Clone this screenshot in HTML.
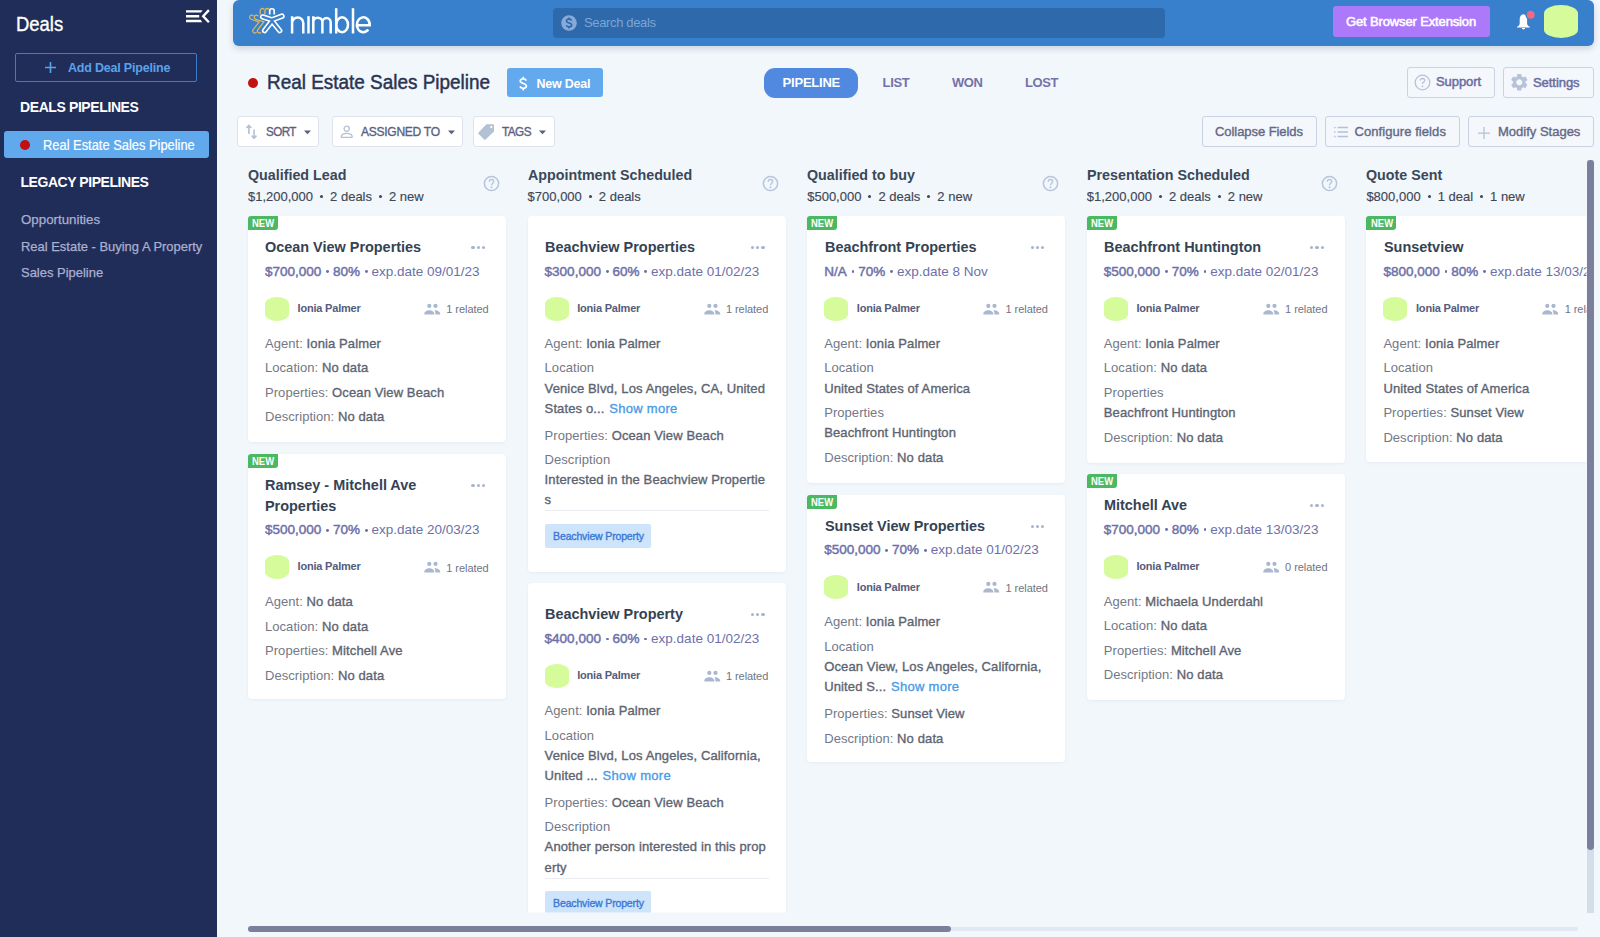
<!DOCTYPE html>
<html><head><meta charset="utf-8"><title>Deals</title>
<style>
html,body{margin:0;padding:0;}
body{width:1600px;height:937px;overflow:hidden;position:relative;background:#f2f7fb;font-family:"Liberation Sans", sans-serif;}
.a{position:absolute;}
.t{position:absolute;white-space:nowrap;}
b{font-weight:700;}
</style></head><body>
<div class="a" style="left:0.00px;top:0.00px;width:217.00px;height:937.00px;background:#212d59;"></div>
<div class="t" style="left:16.00px;top:13.65px;font-size:20.5px;line-height:20.5px;color:#ffffff;transform:scaleX(0.9);transform-origin:0 0;-webkit-text-stroke:0.35px currentColor;">Deals</div>
<svg class="a" style="left:180px;top:4px" width="36" height="24" viewBox="180 4 36 24"><path d="M186 10.2 H202.6 L201 12.6 H186Z M186 15 H199.2 V17.4 H186Z M186 19.8 H200.6 L202.2 22.2 H186Z" fill="#fff"/><path d="M208.9 10.1 L203.2 16.2 L208.9 22.3" stroke="#fff" stroke-width="2.4" fill="none" stroke-linejoin="miter"/></svg>
<div class="a" style="left:15.00px;top:53.00px;width:182.00px;height:29.00px;border:1px solid #3b7dcc;border-radius:2px;box-sizing:border-box;"></div>
<svg class="a" style="left:44px;top:61px" width="13" height="13" viewBox="0 0 13 13"><path d="M6.5 1 V12 M1 6.5 H12" stroke="#5ba2ea" stroke-width="1.6" fill="none"/></svg>
<div class="t" style="left:68.00px;top:61.92px;font-size:12.5px;line-height:12.5px;color:#5ba2ea;font-weight:700;letter-spacing:-0.2px;">Add Deal Pipeline</div>
<div class="t" style="left:20.00px;top:100.15px;font-size:14px;line-height:14px;color:#ffffff;font-weight:700;letter-spacing:-0.4px;">DEALS PIPELINES</div>
<div class="a" style="left:4.30px;top:131.00px;width:204.70px;height:27.00px;background:#5fa9ec;border-radius:3px;"></div>
<div class="a" style="left:19.60px;top:139.60px;width:10.40px;height:10.40px;background:#c20f0f;border-radius:50%;"></div>
<div class="t" style="left:43.20px;top:137.75px;font-size:14px;line-height:14px;color:#ffffff;transform:scaleX(0.92);transform-origin:0 0;-webkit-text-stroke:0.2px currentColor;">Real Estate Sales Pipeline</div>
<div class="t" style="left:20.50px;top:175.25px;font-size:14px;line-height:14px;color:#ffffff;font-weight:700;letter-spacing:-0.45px;">LEGACY PIPELINES</div>
<div class="t" style="left:21.00px;top:213.37px;font-size:13.5px;line-height:13.5px;color:#aab0d0;transform:scaleX(0.985);transform-origin:0 0;-webkit-text-stroke:0.25px currentColor;">Opportunities</div>
<div class="t" style="left:21.00px;top:240.07px;font-size:13.5px;line-height:13.5px;color:#aab0d0;transform:scaleX(0.959);transform-origin:0 0;-webkit-text-stroke:0.25px currentColor;">Real Estate - Buying A Property</div>
<div class="t" style="left:21.00px;top:265.97px;font-size:13.5px;line-height:13.5px;color:#aab0d0;transform:scaleX(0.96);transform-origin:0 0;-webkit-text-stroke:0.25px currentColor;">Sales Pipeline</div>
<div class="a" style="left:233.00px;top:0.00px;width:1360.50px;height:45.50px;background:#3880cc;border-radius:6px;box-shadow:0 3px 6px rgba(40,60,100,0.18);"></div>
<svg class="a" style="left:0;top:0" width="400" height="45" viewBox="0 0 400 45"><path d="M253.76 15.82 L252.34 15.35 A2.05 2.05 0 0 0 251.06 19.25 L259.19 21.94 L253.18 29.64 A2.05 2.05 0 0 0 256.42 32.16" stroke="#d6b268" stroke-width="1.25" fill="none" stroke-linejoin="round"/><path d="M260.20 14.6 V11 A2.3 2.3 0 0 1 264.20 9.3" stroke="#d6b268" stroke-width="1.35" fill="none"/><path d="M258.46 15.82 L257.04 15.35 A2.05 2.05 0 0 0 255.76 19.25 L263.89 21.94 L257.88 29.64 A2.05 2.05 0 0 0 261.12 32.16" stroke="#e6b84e" stroke-width="1.25" fill="none" stroke-linejoin="round"/><path d="M264.90 14.6 V11 A2.3 2.3 0 0 1 268.90 9.3" stroke="#e6b84e" stroke-width="1.35" fill="none"/><path d="M269.7 14.6 V11 A2.25 2.25 0 0 1 274.2 11 V14.6" stroke="#ffffff" stroke-width="1.7" fill="none"/><path d="M272 19.8 L262.6 16.9 M272 19.8 L282 16.1 M272 21 L264.6 30.6 M272 21 L279.7 30.6" stroke="#ffffff" stroke-width="5.4" stroke-linecap="round" stroke-linejoin="round" fill="none"/><path d="M272 19.8 L262.6 16.9 M272 19.8 L282 16.1 M272 21 L264.6 30.6 M272 21 L279.7 30.6" stroke="#3880cc" stroke-width="2.3" stroke-linecap="round" stroke-linejoin="round" fill="none"/><g stroke="#fff" stroke-width="2.5" fill="none"><path d="M292.1 16.2 V33.5 M292.1 23 A5.6 5.6 0 0 1 303.3 23 V33.5"/><path d="M308.5 16.2 V33.5"/><path d="M313.3 16.2 V33.5 M313.3 22.2 A4.55 4.55 0 0 1 322.4 22.2 V33.5 M322.4 22.2 A4.15 4.15 0 0 1 330.7 22.2 V33.5"/><path d="M336.2 8.2 V33.5"/><ellipse cx="342.1" cy="24.8" rx="5.9" ry="7.45"/><path d="M353 8.2 V33.5"/><path d="M356.85 25.2 H369.75 A6.45 7.45 0 1 0 368.24 29.59"/></g></svg>
<div class="a" style="left:552.60px;top:8.00px;width:612.40px;height:30.00px;background:#2d69ab;border-radius:4px;"></div>
<svg class="a" style="left:561px;top:15px" width="16" height="16" viewBox="0 0 16 16"><circle cx="8" cy="8" r="7.8" fill="#88aad8"/><path d="M10.6 5.6 C10.2 4.6 9.2 4.1 8 4.1 C6.6 4.1 5.5 4.8 5.5 6 C5.5 8.6 10.7 7.3 10.7 10 C10.7 11.2 9.5 11.9 8 11.9 C6.7 11.9 5.7 11.3 5.3 10.3 M8 2.6 V4.1 M8 11.9 V13.4" stroke="#2d69ab" stroke-width="1.6" fill="none"/></svg>
<div class="t" style="left:584.00px;top:15.80px;font-size:13px;line-height:13px;color:#7ea5d5;letter-spacing:-0.35px;">Search deals</div>
<div class="a" style="left:1333.00px;top:6.00px;width:157.00px;height:31.00px;background:#ad79fb;border-radius:3px;"></div>
<div class="t" style="left:1346.00px;top:15.00px;font-size:13px;line-height:13px;color:#ffffff;letter-spacing:-0.14px;-webkit-text-stroke:0.55px currentColor;">Get Browser Extension</div>
<svg class="a" style="left:1510px;top:6px" width="30" height="28" viewBox="1510 6 30 28"><path d="M1523.4 14.3 C1521.2 14.6 1519.7 16.4 1519.7 19.2 V23.4 C1519.7 24.9 1518.6 26 1517 26.8 V27.5 H1529.8 V26.8 C1528.2 26 1527.1 24.9 1527.1 23.4 V19.2 C1527.1 16.4 1525.6 14.6 1523.4 14.3 Z" fill="#fff"/><path d="M1521.9 28 H1525 C1525 28.9 1524.3 29.4 1523.45 29.4 C1522.6 29.4 1521.9 28.9 1521.9 28 Z" fill="#fff"/><circle cx="1530.7" cy="14.8" r="4.6" fill="#f4697f" stroke="#3880cc" stroke-width="1.3"/></svg>
<div class="a" style="left:1544.00px;top:5.00px;width:34.00px;height:33.00px;background:#d6fb9b;border-radius:50% / 25%;"></div>
<div class="a" style="left:247.60px;top:77.80px;width:10.00px;height:10.00px;background:#c1130f;border-radius:50%;"></div>
<div class="t" style="left:266.60px;top:71.57px;font-size:20px;line-height:20px;color:#2a3452;transform:scaleX(0.946);transform-origin:0 0;-webkit-text-stroke:0.45px currentColor;">Real Estate Sales Pipeline</div>
<div class="a" style="left:507.00px;top:68.00px;width:96.00px;height:29.00px;background:#63a9ed;border-radius:3px;"></div>
<svg class="a" style="left:516px;top:75.2px" width="14" height="18" viewBox="0 0 14 18"><path d="M10.3 5.6 C9.9 4.5 8.8 3.9 7.2 3.9 C5.5 3.9 4.2 4.8 4.2 6.1 C4.2 9.1 10.4 7.8 10.4 11 C10.4 12.4 9 13.3 7.2 13.3 C5.6 13.3 4.4 12.6 3.9 11.4 M7.2 1.8 V3.9 M7.2 13.3 V15.6" stroke="#fff" stroke-width="1.7" fill="none"/></svg>
<div class="t" style="left:536.60px;top:78.02px;font-size:12.5px;line-height:12.5px;color:#ffffff;font-weight:700;letter-spacing:-0.25px;">New Deal</div>
<div class="a" style="left:764.00px;top:68.00px;width:94.40px;height:30.00px;background:#5189e1;border-radius:11px;"></div>
<div class="t" style="left:782.60px;top:76.00px;font-size:13px;line-height:13px;color:#ffffff;font-weight:700;letter-spacing:-0.22px;">PIPELINE</div>
<div class="t" style="left:882.60px;top:76.00px;font-size:13px;line-height:13px;color:#7472a8;font-weight:700;letter-spacing:-0.35px;">LIST</div>
<div class="t" style="left:952.00px;top:76.00px;font-size:13px;line-height:13px;color:#7472a8;font-weight:700;letter-spacing:-0.45px;">WON</div>
<div class="t" style="left:1025.00px;top:76.00px;font-size:13px;line-height:13px;color:#7472a8;font-weight:700;letter-spacing:-0.42px;">LOST</div>
<div class="a" style="left:1407.00px;top:67.20px;width:88.00px;height:31.20px;border:1px solid #cdd1e2;border-radius:3px;box-sizing:border-box;background:#f4f7fc;"></div>
<svg class="a" style="left:1414.4px;top:74px" width="17" height="17" viewBox="0 0 17 17"><circle cx="8.5" cy="8.5" r="7.3" stroke="#b7c2d9" stroke-width="1.3" fill="none"/><path d="M6.3 6.6 C6.3 5.3 7.3 4.5 8.5 4.5 C9.7 4.5 10.7 5.3 10.7 6.5 C10.7 8 8.5 8.2 8.5 10" stroke="#b7c2d9" stroke-width="1.3" fill="none"/><circle cx="8.5" cy="12.3" r="0.9" fill="#b7c2d9"/></svg>
<div class="t" style="left:1436.00px;top:75.10px;font-size:13px;line-height:13px;color:#6c6da0;letter-spacing:-0.08px;-webkit-text-stroke:0.5px currentColor;">Support</div>
<div class="a" style="left:1503.00px;top:67.20px;width:90.60px;height:31.20px;border:1px solid #cdd1e2;border-radius:3px;box-sizing:border-box;background:#f4f7fc;"></div>
<svg class="a" style="left:1509.1px;top:72.2px" width="20.6" height="20.6" viewBox="0 0 24 24"><path fill="#b7c2d9" d="M19.14 12.94c.04-.3.06-.61.06-.94 0-.32-.02-.64-.07-.94l2.03-1.58a.49.49 0 0 0 .12-.61l-1.92-3.32a.488.488 0 0 0-.59-.22l-2.39.96c-.5-.38-1.03-.7-1.62-.94l-.36-2.54a.484.484 0 0 0-.48-.41h-3.84c-.24 0-.43.17-.47.41l-.36 2.54c-.59.24-1.13.57-1.62.94l-2.39-.96c-.22-.08-.47 0-.59.22L2.74 8.87c-.12.21-.08.47.12.61l2.03 1.58c-.05.3-.09.63-.09.94s.02.64.07.94l-2.03 1.58a.49.49 0 0 0-.12.61l1.92 3.32c.12.22.37.29.59.22l2.39-.96c.5.38 1.03.7 1.62.94l.36 2.54c.05.24.24.41.48.41h3.84c.24 0 .44-.17.47-.41l.36-2.54c.59-.24 1.13-.56 1.62-.94l2.39.96c.22.08.47 0 .59-.22l1.92-3.32c.12-.22.07-.47-.12-.61l-2.01-1.58zM12 15.6c-1.98 0-3.6-1.62-3.6-3.6s1.62-3.6 3.6-3.6 3.6 1.62 3.6 3.6-1.62 3.6-3.6 3.6z"/></svg>
<div class="t" style="left:1533.00px;top:75.50px;font-size:13px;line-height:13px;color:#6c6da0;letter-spacing:-0.05px;-webkit-text-stroke:0.5px currentColor;">Settings</div>
<div class="a" style="left:237.30px;top:116.00px;width:81.60px;height:31.00px;background:#ffffff;border:1px solid #dfe4ee;border-radius:3px;box-sizing:border-box;"></div>
<div class="a" style="left:332.30px;top:116.00px;width:130.40px;height:31.00px;background:#ffffff;border:1px solid #dfe4ee;border-radius:3px;box-sizing:border-box;"></div>
<div class="a" style="left:472.70px;top:116.00px;width:82.20px;height:31.00px;background:#ffffff;border:1px solid #dfe4ee;border-radius:3px;box-sizing:border-box;"></div>
<svg class="a" style="left:244px;top:122px" width="15" height="19" viewBox="0 0 15 19"><path d="M4.9 12 V3.6 M2.5 6 L4.9 3.4 L7.3 6" stroke="#b3c1d4" stroke-width="1.6" fill="none"/><path d="M10.1 7.5 V16 M7.7 13.6 L10.1 16.2 L12.5 13.6" stroke="#b3c1d4" stroke-width="1.6" fill="none"/></svg>
<div class="t" style="left:266.00px;top:125.62px;font-size:12.5px;line-height:12.5px;color:#5a6180;transform:scaleX(0.93);transform-origin:0 0;letter-spacing:-0.6px;-webkit-text-stroke:0.35px currentColor;">SORT</div>
<svg class="a" style="left:304px;top:130px" width="8" height="5" viewBox="0 0 8 5"><path d="M0 0.6 H7 L3.5 4.2Z" fill="#5a6180"/></svg>
<svg class="a" style="left:447.5px;top:130px" width="8" height="5" viewBox="0 0 8 5"><path d="M0 0.6 H7 L3.5 4.2Z" fill="#5a6180"/></svg>
<svg class="a" style="left:539.3px;top:130px" width="8" height="5" viewBox="0 0 8 5"><path d="M0 0.6 H7 L3.5 4.2Z" fill="#5a6180"/></svg>
<svg class="a" style="left:340px;top:125px" width="14" height="14" viewBox="0 0 14 14"><circle cx="6.7" cy="3.7" r="2.6" stroke="#b3c1d4" stroke-width="1.3" fill="none"/><path d="M1.3 12.3 V11 C1.3 9.4 4.3 8.3 6.7 8.3 C9.1 8.3 12.1 9.4 12.1 11 V12.3 Z" stroke="#b3c1d4" stroke-width="1.3" fill="none" stroke-linejoin="round"/></svg>
<div class="t" style="left:361.00px;top:125.62px;font-size:12.5px;line-height:12.5px;color:#5a6180;transform:scaleX(0.965);transform-origin:0 0;letter-spacing:-0.3px;-webkit-text-stroke:0.35px currentColor;">ASSIGNED TO</div>
<svg class="a" style="left:477px;top:123px" width="18" height="18" viewBox="0 0 18 18"><path d="M9.4 1.2 H16 Q17 1.2 17 2.2 V8.6 L8.6 16.6 Q7.9 17.3 7.2 16.6 L1.6 11 Q0.9 10.3 1.6 9.6 Z" fill="#b3c1d4"/><rect x="13.3" y="3.1" width="2" height="2" fill="#fff"/></svg>
<div class="t" style="left:502.00px;top:125.62px;font-size:12.5px;line-height:12.5px;color:#5a6180;transform:scaleX(0.94);transform-origin:0 0;letter-spacing:-0.55px;-webkit-text-stroke:0.35px currentColor;">TAGS</div>
<div class="a" style="left:1202.00px;top:116.00px;width:114.50px;height:31.00px;background:#f4f7fc;border:1px solid #cbd0e2;border-radius:3px;box-sizing:border-box;"></div>
<div class="a" style="left:1325.00px;top:116.00px;width:134.50px;height:31.00px;background:#f4f7fc;border:1px solid #cbd0e2;border-radius:3px;box-sizing:border-box;"></div>
<div class="a" style="left:1468.40px;top:116.00px;width:125.20px;height:31.00px;background:#f4f7fc;border:1px solid #cbd0e2;border-radius:3px;box-sizing:border-box;"></div>
<div class="t" style="left:1215.00px;top:125.40px;font-size:13px;line-height:13px;color:#636985;letter-spacing:-0.06px;-webkit-text-stroke:0.38px currentColor;">Collapse Fields</div>
<svg class="a" style="left:1333px;top:125.3px" width="16" height="15" viewBox="0 0 16 15"><circle cx="1.8" cy="2.5" r="0.85" fill="#b3c1d4"/><circle cx="1.8" cy="7" r="0.85" fill="#b3c1d4"/><circle cx="1.8" cy="11.5" r="0.85" fill="#b3c1d4"/><path d="M4.6 2.5 H15 M4.6 7 H15 M4.6 11.5 H15" stroke="#b3c1d4" stroke-width="1.3" fill="none"/></svg>
<div class="t" style="left:1354.50px;top:125.40px;font-size:13px;line-height:13px;color:#636985;letter-spacing:0.07px;-webkit-text-stroke:0.38px currentColor;">Configure fields</div>
<svg class="a" style="left:1477.2px;top:125.5px" width="14" height="14" viewBox="0 0 14 14"><path d="M7 1 V13 M1 7 H13" stroke="#b3c1d4" stroke-width="1.25" fill="none"/></svg>
<div class="t" style="left:1498.00px;top:125.40px;font-size:13px;line-height:13px;color:#636985;-webkit-text-stroke:0.38px currentColor;">Modify Stages</div>
<div class="a" style="left:0;top:0;width:1600px;height:937px;clip-path:polygon(220px 150px,1586.5px 150px,1586.5px 912.4px,220px 912.4px);">
<div class="t" style="left:248.00px;top:167.10px;font-size:15px;line-height:15px;color:#3a4859;transform:scaleX(0.952);transform-origin:0 0;font-weight:700;">Qualified Lead</div>
<div class="t" style="left:248.00px;top:190.10px;font-size:13px;line-height:13px;color:#3e4757;-webkit-text-stroke:0.15px currentColor;">$1,200,000<span style="display:inline-block;width:3px;height:3px;border-radius:50%;background:currentColor;vertical-align:3.5px;margin:0 7px"></span>2 deals<span style="display:inline-block;width:3px;height:3px;border-radius:50%;background:currentColor;vertical-align:3.5px;margin:0 7px"></span>2 new</div>
<svg class="a" style="left:482.50px;top:175px" width="17" height="17" viewBox="0 0 17 17"><circle cx="8.5" cy="8.5" r="7.1" stroke="#b9c5dc" stroke-width="1.5" fill="none"/><path d="M6.3 6.7 C6.3 5.3 7.3 4.5 8.5 4.5 C9.8 4.5 10.7 5.3 10.7 6.5 C10.7 8.1 8.5 8.3 8.5 10.2" stroke="#b9c5dc" stroke-width="1.45" fill="none"/><circle cx="8.5" cy="12.3" r="1" fill="#b9c5dc"/></svg>
<div class="t" style="left:527.60px;top:167.10px;font-size:15px;line-height:15px;color:#3a4859;transform:scaleX(0.952);transform-origin:0 0;font-weight:700;">Appointment Scheduled</div>
<div class="t" style="left:527.60px;top:190.10px;font-size:13px;line-height:13px;color:#3e4757;-webkit-text-stroke:0.15px currentColor;">$700,000<span style="display:inline-block;width:3px;height:3px;border-radius:50%;background:currentColor;vertical-align:3.5px;margin:0 7px"></span>2 deals</div>
<svg class="a" style="left:762.10px;top:175px" width="17" height="17" viewBox="0 0 17 17"><circle cx="8.5" cy="8.5" r="7.1" stroke="#b9c5dc" stroke-width="1.5" fill="none"/><path d="M6.3 6.7 C6.3 5.3 7.3 4.5 8.5 4.5 C9.8 4.5 10.7 5.3 10.7 6.5 C10.7 8.1 8.5 8.3 8.5 10.2" stroke="#b9c5dc" stroke-width="1.45" fill="none"/><circle cx="8.5" cy="12.3" r="1" fill="#b9c5dc"/></svg>
<div class="t" style="left:807.20px;top:167.10px;font-size:15px;line-height:15px;color:#3a4859;transform:scaleX(0.952);transform-origin:0 0;font-weight:700;">Qualified to buy</div>
<div class="t" style="left:807.20px;top:190.10px;font-size:13px;line-height:13px;color:#3e4757;-webkit-text-stroke:0.15px currentColor;">$500,000<span style="display:inline-block;width:3px;height:3px;border-radius:50%;background:currentColor;vertical-align:3.5px;margin:0 7px"></span>2 deals<span style="display:inline-block;width:3px;height:3px;border-radius:50%;background:currentColor;vertical-align:3.5px;margin:0 7px"></span>2 new</div>
<svg class="a" style="left:1041.70px;top:175px" width="17" height="17" viewBox="0 0 17 17"><circle cx="8.5" cy="8.5" r="7.1" stroke="#b9c5dc" stroke-width="1.5" fill="none"/><path d="M6.3 6.7 C6.3 5.3 7.3 4.5 8.5 4.5 C9.8 4.5 10.7 5.3 10.7 6.5 C10.7 8.1 8.5 8.3 8.5 10.2" stroke="#b9c5dc" stroke-width="1.45" fill="none"/><circle cx="8.5" cy="12.3" r="1" fill="#b9c5dc"/></svg>
<div class="t" style="left:1086.80px;top:167.10px;font-size:15px;line-height:15px;color:#3a4859;transform:scaleX(0.952);transform-origin:0 0;font-weight:700;">Presentation Scheduled</div>
<div class="t" style="left:1086.80px;top:190.10px;font-size:13px;line-height:13px;color:#3e4757;-webkit-text-stroke:0.15px currentColor;">$1,200,000<span style="display:inline-block;width:3px;height:3px;border-radius:50%;background:currentColor;vertical-align:3.5px;margin:0 7px"></span>2 deals<span style="display:inline-block;width:3px;height:3px;border-radius:50%;background:currentColor;vertical-align:3.5px;margin:0 7px"></span>2 new</div>
<svg class="a" style="left:1321.30px;top:175px" width="17" height="17" viewBox="0 0 17 17"><circle cx="8.5" cy="8.5" r="7.1" stroke="#b9c5dc" stroke-width="1.5" fill="none"/><path d="M6.3 6.7 C6.3 5.3 7.3 4.5 8.5 4.5 C9.8 4.5 10.7 5.3 10.7 6.5 C10.7 8.1 8.5 8.3 8.5 10.2" stroke="#b9c5dc" stroke-width="1.45" fill="none"/><circle cx="8.5" cy="12.3" r="1" fill="#b9c5dc"/></svg>
<div class="t" style="left:1366.40px;top:167.10px;font-size:15px;line-height:15px;color:#3a4859;transform:scaleX(0.952);transform-origin:0 0;font-weight:700;">Quote Sent</div>
<div class="t" style="left:1366.40px;top:190.10px;font-size:13px;line-height:13px;color:#3e4757;-webkit-text-stroke:0.15px currentColor;">$800,000<span style="display:inline-block;width:3px;height:3px;border-radius:50%;background:currentColor;vertical-align:3.5px;margin:0 7px"></span>1 deal<span style="display:inline-block;width:3px;height:3px;border-radius:50%;background:currentColor;vertical-align:3.5px;margin:0 7px"></span>1 new</div>
<svg class="a" style="left:1600.90px;top:175px" width="17" height="17" viewBox="0 0 17 17"><circle cx="8.5" cy="8.5" r="7.1" stroke="#b9c5dc" stroke-width="1.5" fill="none"/><path d="M6.3 6.7 C6.3 5.3 7.3 4.5 8.5 4.5 C9.8 4.5 10.7 5.3 10.7 6.5 C10.7 8.1 8.5 8.3 8.5 10.2" stroke="#b9c5dc" stroke-width="1.45" fill="none"/><circle cx="8.5" cy="12.3" r="1" fill="#b9c5dc"/></svg>
<div class="a" style="left:248.00px;top:216.00px;width:258.00px;height:226.00px;background:#fff;border-radius:4px;box-shadow:0 1px 3px rgba(60,80,120,0.07);"></div>
<div class="a" style="left:248.00px;top:216.00px;width:30.00px;height:14.20px;background:#4bb862;border-radius:3px 0 3px 0;"></div>
<div class="t" style="left:252.20px;top:218.31px;font-size:10.5px;line-height:10.5px;color:#ffffff;transform:scaleX(0.9);transform-origin:0 0;font-weight:700;">NEW</div>
<div class="t" style="left:265.30px;top:239.20px;font-size:15px;line-height:15px;color:#344354;transform:scaleX(0.962);transform-origin:0 0;font-weight:700;">Ocean View Properties</div>
<div class="a" style="left:471.30px;top:246.00px;width:3.30px;height:3.30px;background:#a8b5cc;border-radius:50%;"></div>
<div class="a" style="left:476.50px;top:246.00px;width:3.30px;height:3.30px;background:#a8b5cc;border-radius:50%;"></div>
<div class="a" style="left:481.70px;top:246.00px;width:3.30px;height:3.30px;background:#a8b5cc;border-radius:50%;"></div>
<div class="t" style="left:265.00px;top:264.97px;font-size:13.5px;line-height:13.5px;color:#6d70a8;"><span style="-webkit-text-stroke:0.45px currentColor;">$700,000<span style="display:inline-block;width:2.9px;height:2.9px;border-radius:50%;background:currentColor;vertical-align:2.7px;margin:0 3.9px 0 4.8px"></span>80%</span><span style="display:inline-block;width:2.9px;height:2.9px;border-radius:50%;background:currentColor;vertical-align:2.7px;margin:0 3.9px 0 4.8px"></span>exp.date 09/01/23</div>
<div class="a" style="left:265.00px;top:296.60px;width:24.00px;height:24.00px;background:#d6fb9b;border-radius:50% / 29%;"></div>
<div class="t" style="left:297.60px;top:303.09px;font-size:11px;line-height:11px;color:#565c7b;font-weight:700;letter-spacing:-0.2px;">Ionia Palmer</div>
<svg class="a" style="left:424.00px;top:301.80px" width="18" height="14" viewBox="0 0 18 14"><circle cx="5.3" cy="3.9" r="2.1" fill="#a9b8cf"/><circle cx="11.5" cy="3.9" r="2.1" fill="#a9b8cf"/><path d="M0.3 12.5 V11.8 C0.3 9.6 3 8.2 5.3 8.2 C7.6 8.2 10.3 9.6 10.3 11.8 V12.5Z" fill="#a9b8cf"/><path d="M11 8.3 C13.4 8.3 16.2 9.6 16.2 11.8 V12.5 H11.4 V11.8 C11.4 10.3 11.2 9.1 10.4 8.4 Z" fill="#a9b8cf"/></svg>
<div class="t" style="left:446.30px;top:304.19px;font-size:11px;line-height:11px;color:#6f7483;letter-spacing:-0.05px;">1 related</div>
<div class="t" style="left:265.00px;top:336.90px;font-size:13px;line-height:13px;color:#727886;letter-spacing:0.05px;">Agent: <span style="color:#5d6471;letter-spacing:0.12px;-webkit-text-stroke:0.35px currentColor;">Ionia Palmer</span></div>
<div class="t" style="left:265.00px;top:361.30px;font-size:13px;line-height:13px;color:#727886;letter-spacing:0.05px;">Location: <span style="color:#5d6471;letter-spacing:0.12px;-webkit-text-stroke:0.35px currentColor;">No data</span></div>
<div class="t" style="left:265.00px;top:385.70px;font-size:13px;line-height:13px;color:#727886;letter-spacing:0.05px;">Properties: <span style="color:#5d6471;letter-spacing:0.12px;-webkit-text-stroke:0.35px currentColor;">Ocean View Beach</span></div>
<div class="t" style="left:265.00px;top:410.10px;font-size:13px;line-height:13px;color:#727886;letter-spacing:0.05px;">Description: <span style="color:#5d6471;letter-spacing:0.12px;-webkit-text-stroke:0.35px currentColor;">No data</span></div>
<div class="a" style="left:248.00px;top:454.00px;width:258.00px;height:245.40px;background:#fff;border-radius:4px;box-shadow:0 1px 3px rgba(60,80,120,0.07);"></div>
<div class="a" style="left:248.00px;top:454.00px;width:30.00px;height:14.20px;background:#4bb862;border-radius:3px 0 3px 0;"></div>
<div class="t" style="left:252.20px;top:456.31px;font-size:10.5px;line-height:10.5px;color:#ffffff;transform:scaleX(0.9);transform-origin:0 0;font-weight:700;">NEW</div>
<div class="t" style="left:265.30px;top:477.20px;font-size:15px;line-height:15px;color:#344354;transform:scaleX(0.962);transform-origin:0 0;font-weight:700;">Ramsey - Mitchell Ave</div>
<div class="t" style="left:265.30px;top:497.60px;font-size:15px;line-height:15px;color:#344354;transform:scaleX(0.962);transform-origin:0 0;font-weight:700;">Properties</div>
<div class="a" style="left:471.30px;top:484.00px;width:3.30px;height:3.30px;background:#a8b5cc;border-radius:50%;"></div>
<div class="a" style="left:476.50px;top:484.00px;width:3.30px;height:3.30px;background:#a8b5cc;border-radius:50%;"></div>
<div class="a" style="left:481.70px;top:484.00px;width:3.30px;height:3.30px;background:#a8b5cc;border-radius:50%;"></div>
<div class="t" style="left:265.00px;top:523.37px;font-size:13.5px;line-height:13.5px;color:#6d70a8;"><span style="-webkit-text-stroke:0.45px currentColor;">$500,000<span style="display:inline-block;width:2.9px;height:2.9px;border-radius:50%;background:currentColor;vertical-align:2.7px;margin:0 3.9px 0 4.8px"></span>70%</span><span style="display:inline-block;width:2.9px;height:2.9px;border-radius:50%;background:currentColor;vertical-align:2.7px;margin:0 3.9px 0 4.8px"></span>exp.date 20/03/23</div>
<div class="a" style="left:265.00px;top:555.00px;width:24.00px;height:24.00px;background:#d6fb9b;border-radius:50% / 29%;"></div>
<div class="t" style="left:297.60px;top:561.49px;font-size:11px;line-height:11px;color:#565c7b;font-weight:700;letter-spacing:-0.2px;">Ionia Palmer</div>
<svg class="a" style="left:424.00px;top:560.20px" width="18" height="14" viewBox="0 0 18 14"><circle cx="5.3" cy="3.9" r="2.1" fill="#a9b8cf"/><circle cx="11.5" cy="3.9" r="2.1" fill="#a9b8cf"/><path d="M0.3 12.5 V11.8 C0.3 9.6 3 8.2 5.3 8.2 C7.6 8.2 10.3 9.6 10.3 11.8 V12.5Z" fill="#a9b8cf"/><path d="M11 8.3 C13.4 8.3 16.2 9.6 16.2 11.8 V12.5 H11.4 V11.8 C11.4 10.3 11.2 9.1 10.4 8.4 Z" fill="#a9b8cf"/></svg>
<div class="t" style="left:446.30px;top:562.59px;font-size:11px;line-height:11px;color:#6f7483;letter-spacing:-0.05px;">1 related</div>
<div class="t" style="left:265.00px;top:595.30px;font-size:13px;line-height:13px;color:#727886;letter-spacing:0.05px;">Agent: <span style="color:#5d6471;letter-spacing:0.12px;-webkit-text-stroke:0.35px currentColor;">No data</span></div>
<div class="t" style="left:265.00px;top:619.70px;font-size:13px;line-height:13px;color:#727886;letter-spacing:0.05px;">Location: <span style="color:#5d6471;letter-spacing:0.12px;-webkit-text-stroke:0.35px currentColor;">No data</span></div>
<div class="t" style="left:265.00px;top:644.10px;font-size:13px;line-height:13px;color:#727886;letter-spacing:0.05px;">Properties: <span style="color:#5d6471;letter-spacing:0.12px;-webkit-text-stroke:0.35px currentColor;">Mitchell Ave</span></div>
<div class="t" style="left:265.00px;top:668.50px;font-size:13px;line-height:13px;color:#727886;letter-spacing:0.05px;">Description: <span style="color:#5d6471;letter-spacing:0.12px;-webkit-text-stroke:0.35px currentColor;">No data</span></div>
<div class="a" style="left:527.60px;top:216.00px;width:258.00px;height:356.00px;background:#fff;border-radius:4px;box-shadow:0 1px 3px rgba(60,80,120,0.07);"></div>
<div class="t" style="left:544.90px;top:239.20px;font-size:15px;line-height:15px;color:#344354;transform:scaleX(0.962);transform-origin:0 0;font-weight:700;">Beachview Properties</div>
<div class="a" style="left:750.90px;top:246.00px;width:3.30px;height:3.30px;background:#a8b5cc;border-radius:50%;"></div>
<div class="a" style="left:756.10px;top:246.00px;width:3.30px;height:3.30px;background:#a8b5cc;border-radius:50%;"></div>
<div class="a" style="left:761.30px;top:246.00px;width:3.30px;height:3.30px;background:#a8b5cc;border-radius:50%;"></div>
<div class="t" style="left:544.60px;top:264.97px;font-size:13.5px;line-height:13.5px;color:#6d70a8;"><span style="-webkit-text-stroke:0.45px currentColor;">$300,000<span style="display:inline-block;width:2.9px;height:2.9px;border-radius:50%;background:currentColor;vertical-align:2.7px;margin:0 3.9px 0 4.8px"></span>60%</span><span style="display:inline-block;width:2.9px;height:2.9px;border-radius:50%;background:currentColor;vertical-align:2.7px;margin:0 3.9px 0 4.8px"></span>exp.date 01/02/23</div>
<div class="a" style="left:544.60px;top:296.60px;width:24.00px;height:24.00px;background:#d6fb9b;border-radius:50% / 29%;"></div>
<div class="t" style="left:577.20px;top:303.09px;font-size:11px;line-height:11px;color:#565c7b;font-weight:700;letter-spacing:-0.2px;">Ionia Palmer</div>
<svg class="a" style="left:703.60px;top:301.80px" width="18" height="14" viewBox="0 0 18 14"><circle cx="5.3" cy="3.9" r="2.1" fill="#a9b8cf"/><circle cx="11.5" cy="3.9" r="2.1" fill="#a9b8cf"/><path d="M0.3 12.5 V11.8 C0.3 9.6 3 8.2 5.3 8.2 C7.6 8.2 10.3 9.6 10.3 11.8 V12.5Z" fill="#a9b8cf"/><path d="M11 8.3 C13.4 8.3 16.2 9.6 16.2 11.8 V12.5 H11.4 V11.8 C11.4 10.3 11.2 9.1 10.4 8.4 Z" fill="#a9b8cf"/></svg>
<div class="t" style="left:725.90px;top:304.19px;font-size:11px;line-height:11px;color:#6f7483;letter-spacing:-0.05px;">1 related</div>
<div class="t" style="left:544.60px;top:336.90px;font-size:13px;line-height:13px;color:#727886;letter-spacing:0.05px;">Agent: <span style="color:#5d6471;letter-spacing:0.12px;-webkit-text-stroke:0.35px currentColor;">Ionia Palmer</span></div>
<div class="t" style="left:544.60px;top:361.30px;font-size:13px;line-height:13px;color:#727886;letter-spacing:0.05px;">Location</div>
<div class="t" style="left:544.60px;top:381.50px;font-size:13px;line-height:13px;color:#5d6471;letter-spacing:0.12px;-webkit-text-stroke:0.35px currentColor;">Venice Blvd, Los Angeles, CA, United</div>
<div class="t" style="left:544.60px;top:401.70px;font-size:13px;line-height:13px;color:#5d6471;letter-spacing:0.12px;-webkit-text-stroke:0.35px currentColor;">States o... <span style="color:#4a9be8;-webkit-text-stroke:0.35px currentColor;margin-left:1px;letter-spacing:0.3px">Show more</span></div>
<div class="t" style="left:544.60px;top:428.60px;font-size:13px;line-height:13px;color:#727886;letter-spacing:0.05px;">Properties: <span style="color:#5d6471;letter-spacing:0.12px;-webkit-text-stroke:0.35px currentColor;">Ocean View Beach</span></div>
<div class="t" style="left:544.60px;top:453.00px;font-size:13px;line-height:13px;color:#727886;letter-spacing:0.05px;">Description</div>
<div class="t" style="left:544.60px;top:473.20px;font-size:13px;line-height:13px;color:#5d6471;letter-spacing:0.12px;-webkit-text-stroke:0.35px currentColor;">Interested in the Beachview Propertie</div>
<div class="t" style="left:544.60px;top:493.40px;font-size:13px;line-height:13px;color:#5d6471;letter-spacing:0.12px;-webkit-text-stroke:0.35px currentColor;">s</div>
<div class="a" style="left:544.60px;top:510.30px;width:224.00px;height:1.00px;background:#eaedf2;"></div>
<div class="a" style="left:544.60px;top:524.20px;width:106.60px;height:23.60px;background:#cde4fb;border-radius:2px;"></div>
<div class="t" style="left:553.10px;top:530.71px;font-size:10.5px;line-height:10.5px;color:#3a78d6;letter-spacing:-0.15px;-webkit-text-stroke:0.35px currentColor;">Beachview Property</div>
<div class="a" style="left:527.60px;top:583.20px;width:258.00px;height:376.80px;background:#fff;border-radius:4px;box-shadow:0 1px 3px rgba(60,80,120,0.07);"></div>
<div class="t" style="left:544.90px;top:606.40px;font-size:15px;line-height:15px;color:#344354;transform:scaleX(0.962);transform-origin:0 0;font-weight:700;">Beachview Property</div>
<div class="a" style="left:750.90px;top:613.20px;width:3.30px;height:3.30px;background:#a8b5cc;border-radius:50%;"></div>
<div class="a" style="left:756.10px;top:613.20px;width:3.30px;height:3.30px;background:#a8b5cc;border-radius:50%;"></div>
<div class="a" style="left:761.30px;top:613.20px;width:3.30px;height:3.30px;background:#a8b5cc;border-radius:50%;"></div>
<div class="t" style="left:544.60px;top:632.17px;font-size:13.5px;line-height:13.5px;color:#6d70a8;"><span style="-webkit-text-stroke:0.45px currentColor;">$400,000<span style="display:inline-block;width:2.9px;height:2.9px;border-radius:50%;background:currentColor;vertical-align:2.7px;margin:0 3.9px 0 4.8px"></span>60%</span><span style="display:inline-block;width:2.9px;height:2.9px;border-radius:50%;background:currentColor;vertical-align:2.7px;margin:0 3.9px 0 4.8px"></span>exp.date 01/02/23</div>
<div class="a" style="left:544.60px;top:663.80px;width:24.00px;height:24.00px;background:#d6fb9b;border-radius:50% / 29%;"></div>
<div class="t" style="left:577.20px;top:670.29px;font-size:11px;line-height:11px;color:#565c7b;font-weight:700;letter-spacing:-0.2px;">Ionia Palmer</div>
<svg class="a" style="left:703.60px;top:669.00px" width="18" height="14" viewBox="0 0 18 14"><circle cx="5.3" cy="3.9" r="2.1" fill="#a9b8cf"/><circle cx="11.5" cy="3.9" r="2.1" fill="#a9b8cf"/><path d="M0.3 12.5 V11.8 C0.3 9.6 3 8.2 5.3 8.2 C7.6 8.2 10.3 9.6 10.3 11.8 V12.5Z" fill="#a9b8cf"/><path d="M11 8.3 C13.4 8.3 16.2 9.6 16.2 11.8 V12.5 H11.4 V11.8 C11.4 10.3 11.2 9.1 10.4 8.4 Z" fill="#a9b8cf"/></svg>
<div class="t" style="left:725.90px;top:671.39px;font-size:11px;line-height:11px;color:#6f7483;letter-spacing:-0.05px;">1 related</div>
<div class="t" style="left:544.60px;top:704.10px;font-size:13px;line-height:13px;color:#727886;letter-spacing:0.05px;">Agent: <span style="color:#5d6471;letter-spacing:0.12px;-webkit-text-stroke:0.35px currentColor;">Ionia Palmer</span></div>
<div class="t" style="left:544.60px;top:728.50px;font-size:13px;line-height:13px;color:#727886;letter-spacing:0.05px;">Location</div>
<div class="t" style="left:544.60px;top:748.70px;font-size:13px;line-height:13px;color:#5d6471;letter-spacing:0.12px;-webkit-text-stroke:0.35px currentColor;">Venice Blvd, Los Angeles, California,</div>
<div class="t" style="left:544.60px;top:768.90px;font-size:13px;line-height:13px;color:#5d6471;letter-spacing:0.12px;-webkit-text-stroke:0.35px currentColor;">United ... <span style="color:#4a9be8;-webkit-text-stroke:0.35px currentColor;margin-left:1px;letter-spacing:0.3px">Show more</span></div>
<div class="t" style="left:544.60px;top:795.80px;font-size:13px;line-height:13px;color:#727886;letter-spacing:0.05px;">Properties: <span style="color:#5d6471;letter-spacing:0.12px;-webkit-text-stroke:0.35px currentColor;">Ocean View Beach</span></div>
<div class="t" style="left:544.60px;top:820.20px;font-size:13px;line-height:13px;color:#727886;letter-spacing:0.05px;">Description</div>
<div class="t" style="left:544.60px;top:840.40px;font-size:13px;line-height:13px;color:#5d6471;letter-spacing:0.12px;-webkit-text-stroke:0.35px currentColor;">Another person interested in this prop</div>
<div class="t" style="left:544.60px;top:860.60px;font-size:13px;line-height:13px;color:#5d6471;letter-spacing:0.12px;-webkit-text-stroke:0.35px currentColor;">erty</div>
<div class="a" style="left:544.60px;top:877.50px;width:224.00px;height:1.00px;background:#eaedf2;"></div>
<div class="a" style="left:544.60px;top:891.40px;width:106.60px;height:23.60px;background:#cde4fb;border-radius:2px;"></div>
<div class="t" style="left:553.10px;top:897.91px;font-size:10.5px;line-height:10.5px;color:#3a78d6;letter-spacing:-0.15px;-webkit-text-stroke:0.35px currentColor;">Beachview Property</div>
<div class="a" style="left:807.20px;top:216.00px;width:258.00px;height:266.50px;background:#fff;border-radius:4px;box-shadow:0 1px 3px rgba(60,80,120,0.07);"></div>
<div class="a" style="left:807.20px;top:216.00px;width:30.00px;height:14.20px;background:#4bb862;border-radius:3px 0 3px 0;"></div>
<div class="t" style="left:811.40px;top:218.31px;font-size:10.5px;line-height:10.5px;color:#ffffff;transform:scaleX(0.9);transform-origin:0 0;font-weight:700;">NEW</div>
<div class="t" style="left:824.50px;top:239.20px;font-size:15px;line-height:15px;color:#344354;transform:scaleX(0.962);transform-origin:0 0;font-weight:700;">Beachfront Properties</div>
<div class="a" style="left:1030.50px;top:246.00px;width:3.30px;height:3.30px;background:#a8b5cc;border-radius:50%;"></div>
<div class="a" style="left:1035.70px;top:246.00px;width:3.30px;height:3.30px;background:#a8b5cc;border-radius:50%;"></div>
<div class="a" style="left:1040.90px;top:246.00px;width:3.30px;height:3.30px;background:#a8b5cc;border-radius:50%;"></div>
<div class="t" style="left:824.20px;top:264.97px;font-size:13.5px;line-height:13.5px;color:#6d70a8;"><span style="-webkit-text-stroke:0.45px currentColor;">N/A<span style="display:inline-block;width:2.9px;height:2.9px;border-radius:50%;background:currentColor;vertical-align:2.7px;margin:0 3.9px 0 4.8px"></span>70%</span><span style="display:inline-block;width:2.9px;height:2.9px;border-radius:50%;background:currentColor;vertical-align:2.7px;margin:0 3.9px 0 4.8px"></span>exp.date 8 Nov</div>
<div class="a" style="left:824.20px;top:296.60px;width:24.00px;height:24.00px;background:#d6fb9b;border-radius:50% / 29%;"></div>
<div class="t" style="left:856.80px;top:303.09px;font-size:11px;line-height:11px;color:#565c7b;font-weight:700;letter-spacing:-0.2px;">Ionia Palmer</div>
<svg class="a" style="left:983.20px;top:301.80px" width="18" height="14" viewBox="0 0 18 14"><circle cx="5.3" cy="3.9" r="2.1" fill="#a9b8cf"/><circle cx="11.5" cy="3.9" r="2.1" fill="#a9b8cf"/><path d="M0.3 12.5 V11.8 C0.3 9.6 3 8.2 5.3 8.2 C7.6 8.2 10.3 9.6 10.3 11.8 V12.5Z" fill="#a9b8cf"/><path d="M11 8.3 C13.4 8.3 16.2 9.6 16.2 11.8 V12.5 H11.4 V11.8 C11.4 10.3 11.2 9.1 10.4 8.4 Z" fill="#a9b8cf"/></svg>
<div class="t" style="left:1005.50px;top:304.19px;font-size:11px;line-height:11px;color:#6f7483;letter-spacing:-0.05px;">1 related</div>
<div class="t" style="left:824.20px;top:336.90px;font-size:13px;line-height:13px;color:#727886;letter-spacing:0.05px;">Agent: <span style="color:#5d6471;letter-spacing:0.12px;-webkit-text-stroke:0.35px currentColor;">Ionia Palmer</span></div>
<div class="t" style="left:824.20px;top:361.30px;font-size:13px;line-height:13px;color:#727886;letter-spacing:0.05px;">Location</div>
<div class="t" style="left:824.20px;top:381.50px;font-size:13px;line-height:13px;color:#5d6471;letter-spacing:0.12px;-webkit-text-stroke:0.35px currentColor;">United States of America</div>
<div class="t" style="left:824.20px;top:406.10px;font-size:13px;line-height:13px;color:#727886;letter-spacing:0.05px;">Properties</div>
<div class="t" style="left:824.20px;top:426.30px;font-size:13px;line-height:13px;color:#5d6471;letter-spacing:0.12px;-webkit-text-stroke:0.35px currentColor;">Beachfront Huntington</div>
<div class="t" style="left:824.20px;top:450.90px;font-size:13px;line-height:13px;color:#727886;letter-spacing:0.05px;">Description: <span style="color:#5d6471;letter-spacing:0.12px;-webkit-text-stroke:0.35px currentColor;">No data</span></div>
<div class="a" style="left:807.20px;top:494.50px;width:258.00px;height:267.70px;background:#fff;border-radius:4px;box-shadow:0 1px 3px rgba(60,80,120,0.07);"></div>
<div class="a" style="left:807.20px;top:494.50px;width:30.00px;height:14.20px;background:#4bb862;border-radius:3px 0 3px 0;"></div>
<div class="t" style="left:811.40px;top:496.81px;font-size:10.5px;line-height:10.5px;color:#ffffff;transform:scaleX(0.9);transform-origin:0 0;font-weight:700;">NEW</div>
<div class="t" style="left:824.50px;top:517.70px;font-size:15px;line-height:15px;color:#344354;transform:scaleX(0.962);transform-origin:0 0;font-weight:700;">Sunset View Properties</div>
<div class="a" style="left:1030.50px;top:524.50px;width:3.30px;height:3.30px;background:#a8b5cc;border-radius:50%;"></div>
<div class="a" style="left:1035.70px;top:524.50px;width:3.30px;height:3.30px;background:#a8b5cc;border-radius:50%;"></div>
<div class="a" style="left:1040.90px;top:524.50px;width:3.30px;height:3.30px;background:#a8b5cc;border-radius:50%;"></div>
<div class="t" style="left:824.20px;top:543.47px;font-size:13.5px;line-height:13.5px;color:#6d70a8;"><span style="-webkit-text-stroke:0.45px currentColor;">$500,000<span style="display:inline-block;width:2.9px;height:2.9px;border-radius:50%;background:currentColor;vertical-align:2.7px;margin:0 3.9px 0 4.8px"></span>70%</span><span style="display:inline-block;width:2.9px;height:2.9px;border-radius:50%;background:currentColor;vertical-align:2.7px;margin:0 3.9px 0 4.8px"></span>exp.date 01/02/23</div>
<div class="a" style="left:824.20px;top:575.10px;width:24.00px;height:24.00px;background:#d6fb9b;border-radius:50% / 29%;"></div>
<div class="t" style="left:856.80px;top:581.59px;font-size:11px;line-height:11px;color:#565c7b;font-weight:700;letter-spacing:-0.2px;">Ionia Palmer</div>
<svg class="a" style="left:983.20px;top:580.30px" width="18" height="14" viewBox="0 0 18 14"><circle cx="5.3" cy="3.9" r="2.1" fill="#a9b8cf"/><circle cx="11.5" cy="3.9" r="2.1" fill="#a9b8cf"/><path d="M0.3 12.5 V11.8 C0.3 9.6 3 8.2 5.3 8.2 C7.6 8.2 10.3 9.6 10.3 11.8 V12.5Z" fill="#a9b8cf"/><path d="M11 8.3 C13.4 8.3 16.2 9.6 16.2 11.8 V12.5 H11.4 V11.8 C11.4 10.3 11.2 9.1 10.4 8.4 Z" fill="#a9b8cf"/></svg>
<div class="t" style="left:1005.50px;top:582.69px;font-size:11px;line-height:11px;color:#6f7483;letter-spacing:-0.05px;">1 related</div>
<div class="t" style="left:824.20px;top:615.40px;font-size:13px;line-height:13px;color:#727886;letter-spacing:0.05px;">Agent: <span style="color:#5d6471;letter-spacing:0.12px;-webkit-text-stroke:0.35px currentColor;">Ionia Palmer</span></div>
<div class="t" style="left:824.20px;top:639.80px;font-size:13px;line-height:13px;color:#727886;letter-spacing:0.05px;">Location</div>
<div class="t" style="left:824.20px;top:660.00px;font-size:13px;line-height:13px;color:#5d6471;letter-spacing:0.12px;-webkit-text-stroke:0.35px currentColor;">Ocean View, Los Angeles, California,</div>
<div class="t" style="left:824.20px;top:680.20px;font-size:13px;line-height:13px;color:#5d6471;letter-spacing:0.12px;-webkit-text-stroke:0.35px currentColor;">United S... <span style="color:#4a9be8;-webkit-text-stroke:0.35px currentColor;margin-left:1px;letter-spacing:0.3px">Show more</span></div>
<div class="t" style="left:824.20px;top:707.10px;font-size:13px;line-height:13px;color:#727886;letter-spacing:0.05px;">Properties: <span style="color:#5d6471;letter-spacing:0.12px;-webkit-text-stroke:0.35px currentColor;">Sunset View</span></div>
<div class="t" style="left:824.20px;top:731.50px;font-size:13px;line-height:13px;color:#727886;letter-spacing:0.05px;">Description: <span style="color:#5d6471;letter-spacing:0.12px;-webkit-text-stroke:0.35px currentColor;">No data</span></div>
<div class="a" style="left:1086.80px;top:216.00px;width:258.00px;height:246.50px;background:#fff;border-radius:4px;box-shadow:0 1px 3px rgba(60,80,120,0.07);"></div>
<div class="a" style="left:1086.80px;top:216.00px;width:30.00px;height:14.20px;background:#4bb862;border-radius:3px 0 3px 0;"></div>
<div class="t" style="left:1091.00px;top:218.31px;font-size:10.5px;line-height:10.5px;color:#ffffff;transform:scaleX(0.9);transform-origin:0 0;font-weight:700;">NEW</div>
<div class="t" style="left:1104.10px;top:239.20px;font-size:15px;line-height:15px;color:#344354;transform:scaleX(0.962);transform-origin:0 0;font-weight:700;">Beachfront Huntington</div>
<div class="a" style="left:1310.10px;top:246.00px;width:3.30px;height:3.30px;background:#a8b5cc;border-radius:50%;"></div>
<div class="a" style="left:1315.30px;top:246.00px;width:3.30px;height:3.30px;background:#a8b5cc;border-radius:50%;"></div>
<div class="a" style="left:1320.50px;top:246.00px;width:3.30px;height:3.30px;background:#a8b5cc;border-radius:50%;"></div>
<div class="t" style="left:1103.80px;top:264.97px;font-size:13.5px;line-height:13.5px;color:#6d70a8;"><span style="-webkit-text-stroke:0.45px currentColor;">$500,000<span style="display:inline-block;width:2.9px;height:2.9px;border-radius:50%;background:currentColor;vertical-align:2.7px;margin:0 3.9px 0 4.8px"></span>70%</span><span style="display:inline-block;width:2.9px;height:2.9px;border-radius:50%;background:currentColor;vertical-align:2.7px;margin:0 3.9px 0 4.8px"></span>exp.date 02/01/23</div>
<div class="a" style="left:1103.80px;top:296.60px;width:24.00px;height:24.00px;background:#d6fb9b;border-radius:50% / 29%;"></div>
<div class="t" style="left:1136.40px;top:303.09px;font-size:11px;line-height:11px;color:#565c7b;font-weight:700;letter-spacing:-0.2px;">Ionia Palmer</div>
<svg class="a" style="left:1262.80px;top:301.80px" width="18" height="14" viewBox="0 0 18 14"><circle cx="5.3" cy="3.9" r="2.1" fill="#a9b8cf"/><circle cx="11.5" cy="3.9" r="2.1" fill="#a9b8cf"/><path d="M0.3 12.5 V11.8 C0.3 9.6 3 8.2 5.3 8.2 C7.6 8.2 10.3 9.6 10.3 11.8 V12.5Z" fill="#a9b8cf"/><path d="M11 8.3 C13.4 8.3 16.2 9.6 16.2 11.8 V12.5 H11.4 V11.8 C11.4 10.3 11.2 9.1 10.4 8.4 Z" fill="#a9b8cf"/></svg>
<div class="t" style="left:1285.10px;top:304.19px;font-size:11px;line-height:11px;color:#6f7483;letter-spacing:-0.05px;">1 related</div>
<div class="t" style="left:1103.80px;top:336.90px;font-size:13px;line-height:13px;color:#727886;letter-spacing:0.05px;">Agent: <span style="color:#5d6471;letter-spacing:0.12px;-webkit-text-stroke:0.35px currentColor;">Ionia Palmer</span></div>
<div class="t" style="left:1103.80px;top:361.30px;font-size:13px;line-height:13px;color:#727886;letter-spacing:0.05px;">Location: <span style="color:#5d6471;letter-spacing:0.12px;-webkit-text-stroke:0.35px currentColor;">No data</span></div>
<div class="t" style="left:1103.80px;top:385.70px;font-size:13px;line-height:13px;color:#727886;letter-spacing:0.05px;">Properties</div>
<div class="t" style="left:1103.80px;top:405.90px;font-size:13px;line-height:13px;color:#5d6471;letter-spacing:0.12px;-webkit-text-stroke:0.35px currentColor;">Beachfront Huntington</div>
<div class="t" style="left:1103.80px;top:430.50px;font-size:13px;line-height:13px;color:#727886;letter-spacing:0.05px;">Description: <span style="color:#5d6471;letter-spacing:0.12px;-webkit-text-stroke:0.35px currentColor;">No data</span></div>
<div class="a" style="left:1086.80px;top:474.00px;width:258.00px;height:225.70px;background:#fff;border-radius:4px;box-shadow:0 1px 3px rgba(60,80,120,0.07);"></div>
<div class="a" style="left:1086.80px;top:474.00px;width:30.00px;height:14.20px;background:#4bb862;border-radius:3px 0 3px 0;"></div>
<div class="t" style="left:1091.00px;top:476.31px;font-size:10.5px;line-height:10.5px;color:#ffffff;transform:scaleX(0.9);transform-origin:0 0;font-weight:700;">NEW</div>
<div class="t" style="left:1104.10px;top:497.20px;font-size:15px;line-height:15px;color:#344354;transform:scaleX(0.962);transform-origin:0 0;font-weight:700;">Mitchell Ave</div>
<div class="a" style="left:1310.10px;top:504.00px;width:3.30px;height:3.30px;background:#a8b5cc;border-radius:50%;"></div>
<div class="a" style="left:1315.30px;top:504.00px;width:3.30px;height:3.30px;background:#a8b5cc;border-radius:50%;"></div>
<div class="a" style="left:1320.50px;top:504.00px;width:3.30px;height:3.30px;background:#a8b5cc;border-radius:50%;"></div>
<div class="t" style="left:1103.80px;top:522.97px;font-size:13.5px;line-height:13.5px;color:#6d70a8;"><span style="-webkit-text-stroke:0.45px currentColor;">$700,000<span style="display:inline-block;width:2.9px;height:2.9px;border-radius:50%;background:currentColor;vertical-align:2.7px;margin:0 3.9px 0 4.8px"></span>80%</span><span style="display:inline-block;width:2.9px;height:2.9px;border-radius:50%;background:currentColor;vertical-align:2.7px;margin:0 3.9px 0 4.8px"></span>exp.date 13/03/23</div>
<div class="a" style="left:1103.80px;top:554.60px;width:24.00px;height:24.00px;background:#d6fb9b;border-radius:50% / 29%;"></div>
<div class="t" style="left:1136.40px;top:561.09px;font-size:11px;line-height:11px;color:#565c7b;font-weight:700;letter-spacing:-0.2px;">Ionia Palmer</div>
<svg class="a" style="left:1262.80px;top:559.80px" width="18" height="14" viewBox="0 0 18 14"><circle cx="5.3" cy="3.9" r="2.1" fill="#a9b8cf"/><circle cx="11.5" cy="3.9" r="2.1" fill="#a9b8cf"/><path d="M0.3 12.5 V11.8 C0.3 9.6 3 8.2 5.3 8.2 C7.6 8.2 10.3 9.6 10.3 11.8 V12.5Z" fill="#a9b8cf"/><path d="M11 8.3 C13.4 8.3 16.2 9.6 16.2 11.8 V12.5 H11.4 V11.8 C11.4 10.3 11.2 9.1 10.4 8.4 Z" fill="#a9b8cf"/></svg>
<div class="t" style="left:1285.10px;top:562.19px;font-size:11px;line-height:11px;color:#6f7483;letter-spacing:-0.05px;">0 related</div>
<div class="t" style="left:1103.80px;top:594.90px;font-size:13px;line-height:13px;color:#727886;letter-spacing:0.05px;">Agent: <span style="color:#5d6471;letter-spacing:0.12px;-webkit-text-stroke:0.35px currentColor;">Michaela Underdahl</span></div>
<div class="t" style="left:1103.80px;top:619.30px;font-size:13px;line-height:13px;color:#727886;letter-spacing:0.05px;">Location: <span style="color:#5d6471;letter-spacing:0.12px;-webkit-text-stroke:0.35px currentColor;">No data</span></div>
<div class="t" style="left:1103.80px;top:643.70px;font-size:13px;line-height:13px;color:#727886;letter-spacing:0.05px;">Properties: <span style="color:#5d6471;letter-spacing:0.12px;-webkit-text-stroke:0.35px currentColor;">Mitchell Ave</span></div>
<div class="t" style="left:1103.80px;top:668.10px;font-size:13px;line-height:13px;color:#727886;letter-spacing:0.05px;">Description: <span style="color:#5d6471;letter-spacing:0.12px;-webkit-text-stroke:0.35px currentColor;">No data</span></div>
<div class="a" style="left:1366.40px;top:216.00px;width:258.00px;height:246.00px;background:#fff;border-radius:4px;box-shadow:0 1px 3px rgba(60,80,120,0.07);"></div>
<div class="a" style="left:1366.40px;top:216.00px;width:30.00px;height:14.20px;background:#4bb862;border-radius:3px 0 3px 0;"></div>
<div class="t" style="left:1370.60px;top:218.31px;font-size:10.5px;line-height:10.5px;color:#ffffff;transform:scaleX(0.9);transform-origin:0 0;font-weight:700;">NEW</div>
<div class="t" style="left:1383.70px;top:239.20px;font-size:15px;line-height:15px;color:#344354;transform:scaleX(0.962);transform-origin:0 0;font-weight:700;">Sunsetview</div>
<div class="a" style="left:1589.70px;top:246.00px;width:3.30px;height:3.30px;background:#a8b5cc;border-radius:50%;"></div>
<div class="a" style="left:1594.90px;top:246.00px;width:3.30px;height:3.30px;background:#a8b5cc;border-radius:50%;"></div>
<div class="a" style="left:1600.10px;top:246.00px;width:3.30px;height:3.30px;background:#a8b5cc;border-radius:50%;"></div>
<div class="t" style="left:1383.40px;top:264.97px;font-size:13.5px;line-height:13.5px;color:#6d70a8;"><span style="-webkit-text-stroke:0.45px currentColor;">$800,000<span style="display:inline-block;width:2.9px;height:2.9px;border-radius:50%;background:currentColor;vertical-align:2.7px;margin:0 3.9px 0 4.8px"></span>80%</span><span style="display:inline-block;width:2.9px;height:2.9px;border-radius:50%;background:currentColor;vertical-align:2.7px;margin:0 3.9px 0 4.8px"></span>exp.date 13/03/23</div>
<div class="a" style="left:1383.40px;top:296.60px;width:24.00px;height:24.00px;background:#d6fb9b;border-radius:50% / 29%;"></div>
<div class="t" style="left:1416.00px;top:303.09px;font-size:11px;line-height:11px;color:#565c7b;font-weight:700;letter-spacing:-0.2px;">Ionia Palmer</div>
<svg class="a" style="left:1542.40px;top:301.80px" width="18" height="14" viewBox="0 0 18 14"><circle cx="5.3" cy="3.9" r="2.1" fill="#a9b8cf"/><circle cx="11.5" cy="3.9" r="2.1" fill="#a9b8cf"/><path d="M0.3 12.5 V11.8 C0.3 9.6 3 8.2 5.3 8.2 C7.6 8.2 10.3 9.6 10.3 11.8 V12.5Z" fill="#a9b8cf"/><path d="M11 8.3 C13.4 8.3 16.2 9.6 16.2 11.8 V12.5 H11.4 V11.8 C11.4 10.3 11.2 9.1 10.4 8.4 Z" fill="#a9b8cf"/></svg>
<div class="t" style="left:1564.70px;top:304.19px;font-size:11px;line-height:11px;color:#6f7483;letter-spacing:-0.05px;">1 related</div>
<div class="t" style="left:1383.40px;top:336.90px;font-size:13px;line-height:13px;color:#727886;letter-spacing:0.05px;">Agent: <span style="color:#5d6471;letter-spacing:0.12px;-webkit-text-stroke:0.35px currentColor;">Ionia Palmer</span></div>
<div class="t" style="left:1383.40px;top:361.30px;font-size:13px;line-height:13px;color:#727886;letter-spacing:0.05px;">Location</div>
<div class="t" style="left:1383.40px;top:381.50px;font-size:13px;line-height:13px;color:#5d6471;letter-spacing:0.12px;-webkit-text-stroke:0.35px currentColor;">United States of America</div>
<div class="t" style="left:1383.40px;top:406.10px;font-size:13px;line-height:13px;color:#727886;letter-spacing:0.05px;">Properties: <span style="color:#5d6471;letter-spacing:0.12px;-webkit-text-stroke:0.35px currentColor;">Sunset View</span></div>
<div class="t" style="left:1383.40px;top:430.50px;font-size:13px;line-height:13px;color:#727886;letter-spacing:0.05px;">Description: <span style="color:#5d6471;letter-spacing:0.12px;-webkit-text-stroke:0.35px currentColor;">No data</span></div>
</div>
<div class="a" style="left:1587.00px;top:159.50px;width:6.70px;height:753.00px;background:#d4dee9;"></div>
<div class="a" style="left:1587.00px;top:159.50px;width:6.70px;height:690.00px;background:#7a7f9c;border-radius:3.4px;"></div>
<div class="a" style="left:950.00px;top:927.20px;width:628.00px;height:3.40px;background:#dfe8f3;border-radius:2px;"></div>
<div class="a" style="left:247.80px;top:926.00px;width:703.00px;height:5.50px;background:#7a7f9c;border-radius:3px;"></div>
</body></html>
